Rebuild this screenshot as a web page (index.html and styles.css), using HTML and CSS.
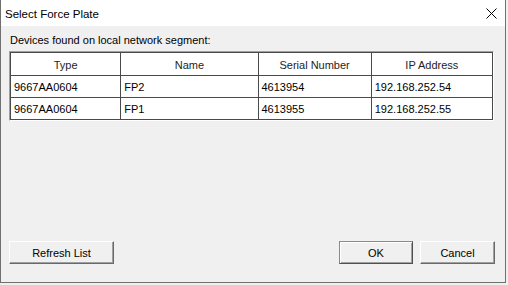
FILE: index.html
```html
<!DOCTYPE html>
<html>
<head lang="en">
    <meta charset="UTF-8">
    <title>Select Force Plate</title>
    <link rel="stylesheet" href="styles.css">
</head>
<body>
<div class="window">
    <div class="titlebar">
        <span class="title">Select Force Plate</span>
        <svg class="close" width="11" height="11" viewBox="0 0 11 11">
            <path d="M0.5 0.5 L10.5 10.5 M10.5 0.5 L0.5 10.5" stroke="#000" stroke-width="1" fill="none"/>
        </svg>
    </div>
    <div class="content">
        <div class="label">Devices found on local network segment:</div>
        <div class="list">
            <table>
                <colgroup>
                    <col class="c-type">
                    <col class="c-name">
                    <col class="c-serial">
                    <col class="c-ip">
                </colgroup>
                <thead>
                <tr>
                    <th>Type</th>
                    <th>Name</th>
                    <th>Serial Number</th>
                    <th>IP Address</th>
                </tr>
                </thead>
                <tbody>
                <tr>
                    <td>9667AA0604</td>
                    <td>FP2</td>
                    <td>4613954</td>
                    <td>192.168.252.54</td>
                </tr>
                <tr>
                    <td>9667AA0604</td>
                    <td>FP1</td>
                    <td>4613955</td>
                    <td>192.168.252.55</td>
                </tr>
                </tbody>
            </table>
        </div>
        <div class="buttons">
            <button class="btn refresh">Refresh List</button>
            <span class="spacer"></span>
            <button class="btn ok">OK</button>
            <button class="btn cancel">Cancel</button>
        </div>
    </div>
</div>
</body>
</html>
```

FILE: styles.css
```css
* {
    margin: 0;
    padding: 0;
    box-sizing: border-box;
}

body {
    width: 508px;
    height: 285px;
    background-color: #f0f0f0;
    font-family: "Liberation Sans", Arial, sans-serif;
    font-size: 11px;
    color: #000;
    overflow: hidden;
}

.window {
    width: 506px;
    height: 283px;
    border: 1px solid #707070;
    border-top: none;
    background-color: #f0f0f0;
    display: flex;
    flex-direction: column;
}

.titlebar {
    height: 26px;
    background-color: #fff;
    display: flex;
    align-items: center;
    padding-left: 4px;
    padding-right: 8px;
}

.title {
    flex: 1;
    font-size: 11.5px;
    line-height: 26px;
    padding-top: 1px;
}

.close {
    display: block;
    margin-top: 1px;
}

.content {
    flex: 1;
    display: flex;
    flex-direction: column;
    padding: 7px 10px 18px 8px;
}

.label {
    line-height: 15px;
    padding-left: 1px;
    margin-bottom: 3px;
}

.list {
    width: 485px;
    border: 1px solid;
    border-color: #a0a0a0 #fff #fff #a0a0a0;
}

table {
    width: 483px;
    border-collapse: collapse;
    table-layout: fixed;
    border: 1px solid #4a4a4a;
    background-color: #fff;
}

.c-type {
    width: 110px;
}

.c-name {
    width: 137px;
}

.c-serial {
    width: 113px;
}

.c-ip {
    width: 121px;
}

th {
    height: 23px;
    font-weight: normal;
    text-align: center;
    border-right: 1px solid #4a4a4a;
    border-bottom: 1px solid #4a4a4a;
    padding-top: 1px;
    color: #1e1e1e;
}

td {
    height: 22px;
    border-right: 1px solid #4a4a4a;
    border-bottom: 1px solid #4a4a4a;
    padding-left: 3px;
    padding-top: 1px;
    white-space: nowrap;
}

.buttons {
    margin-top: auto;
    display: flex;
    align-items: center;
}

.spacer {
    flex: 1;
}

.btn {
    height: 23px;
    font-family: inherit;
    font-size: 11px;
    background-color: #f0f0f0;
    border: 1px solid;
    border-color: #fff #696969 #696969 #fff;
    box-shadow: inset -1px -1px #a0a0a0;
    color: #000;
}

.refresh {
    width: 105px;
}

.ok {
    width: 74px;
    border-color: #8a8a8a #505050 #505050 #8a8a8a;
    box-shadow: inset 1px 1px #fff, inset -1px -1px #a0a0a0;
    margin-right: 7px;
}

.cancel {
    width: 75px;
}
```
